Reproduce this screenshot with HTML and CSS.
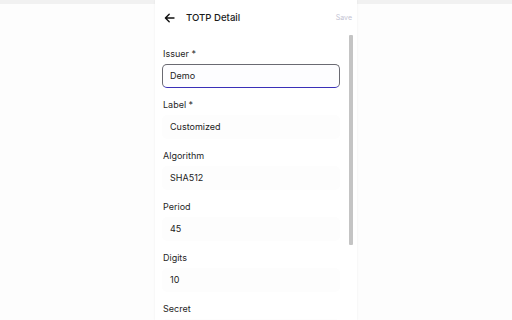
FILE: index.html
```html
<!DOCTYPE html>
<html>
<head>
<meta charset="utf-8">
<link rel="stylesheet" href="styles.css">
</head>
<body>
<div class="stage">
  <div class="panel">
    <div class="header">
      <svg class="back" width="11" height="10" viewBox="0 0 11 10"><path d="M10 5H1.5M5.2 1.2L1.4 5l3.8 3.8" fill="none" stroke="#111" stroke-width="1.4" stroke-linecap="round" stroke-linejoin="round"/></svg>
      <span class="title">TOTP Detail</span>
      <span class="save">Save</span>
    </div>
    <div class="scroll">
      <div class="form">
        <div class="field">
          <div class="label">Issuer *</div>
          <div class="input focused">Demo</div>
        </div>
        <div class="field">
          <div class="label">Label *</div>
          <div class="input">Customized</div>
        </div>
        <div class="field">
          <div class="label">Algorithm</div>
          <div class="input">SHA512</div>
        </div>
        <div class="field">
          <div class="label">Period</div>
          <div class="input">45</div>
        </div>
        <div class="field">
          <div class="label">Digits</div>
          <div class="input">10</div>
        </div>
        <div class="field">
          <div class="label">Secret</div>
          <div class="input"></div>
        </div>
      </div>
      <div class="scrollthumb"></div>
    </div>
  </div>
</div>
</body>
</html>
```
FILE: styles.css
```css
html, body {
  margin: 0;
  padding: 0;
  height: 320px;
  overflow: hidden;
  background: linear-gradient(#f1f1f1 0, #f1f1f1 4px, #fdfdfd 4px);
  font-family: Inter, "Noto Sans", sans-serif;
  color: #1f1f1f;
}
.stage {
  display: flex;
  justify-content: center;
  height: 320px;
}
.panel {
  width: 202px;
  height: 320px;
  background: #ffffff;
  box-shadow: 0 0 2px rgba(0,0,0,0.07);
  display: flex;
  flex-direction: column;
}
.header {
  height: 35px;
  display: flex;
  align-items: center;
  padding-left: 9px;
  padding-right: 5px;
  flex: none;
}
.back {
  display: block;
}
.title {
  margin-left: 11px;
  font-size: 9.6px;
  font-weight: 500;
  color: #1a1a1a;
}
.save {
  margin-left: auto;
  font-size: 7px;
  color: #c3c3d3;
}
.scroll {
  position: relative;
  height: 285px;
  overflow: hidden;
}
.scrollthumb {
  position: absolute;
  top: 0;
  left: 194px;
  width: 4px;
  height: 210px;
  background: #c4c4c4;
  border-radius: 1px;
}
.form {
  padding: 13px 0 0 7px;
  display: flex;
  flex-direction: column;
  gap: 11px;
}
.field {
  display: flex;
  flex-direction: column;
  gap: 4px;
}
.label {
  font-size: 9px;
  line-height: 12px;
  padding-left: 1px;
  color: #1f1f1f;
}
.input {
  width: 178px;
  height: 24px;
  box-sizing: border-box;
  border-radius: 5px;
  background: #fdfdfd;
  font-size: 9px;
  line-height: 24px;
  padding-left: 8px;
  color: #222;
}
.input.focused {
  border: 1px solid #6a6a72;
  border-bottom: 1.5px solid #3a30b8;
  background: #fdfdff;
  line-height: 22px;
  padding-left: 7px;
}
```
